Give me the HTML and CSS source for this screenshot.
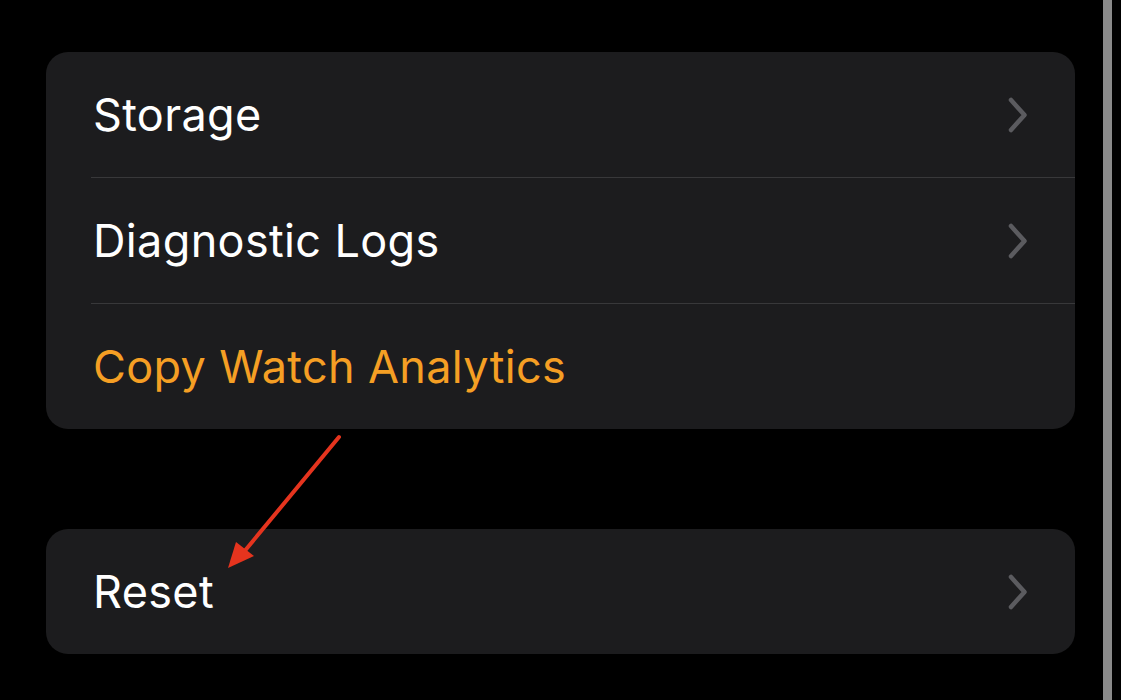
FILE: index.html
```html
<!DOCTYPE html>
<html>
<head>
<meta charset="utf-8">
<link rel="stylesheet" href="styles.css">
</head>
<body>
<div class="screen">
  <div class="content">
    <div class="group">
      <div class="row">
        <span class="label">Storage</span>
        <svg class="chev" viewBox="0 0 22 38" width="22" height="38"><path d="M4 4 L17.5 19 L4 34" fill="none" stroke="#5b5b5f" stroke-width="4.5" stroke-linecap="round" stroke-linejoin="round"/></svg>
      </div>
      <div class="row">
        <span class="label">Diagnostic Logs</span>
        <svg class="chev" viewBox="0 0 22 38" width="22" height="38"><path d="M4 4 L17.5 19 L4 34" fill="none" stroke="#5b5b5f" stroke-width="4.5" stroke-linecap="round" stroke-linejoin="round"/></svg>
      </div>
      <div class="row">
        <span class="label orange">Copy Watch Analytics</span>
      </div>
    </div>
    <div class="group">
      <div class="row">
        <span class="label">Reset</span>
        <svg class="chev" viewBox="0 0 22 38" width="22" height="38"><path d="M4 4 L17.5 19 L4 34" fill="none" stroke="#5b5b5f" stroke-width="4.5" stroke-linecap="round" stroke-linejoin="round"/></svg>
      </div>
    </div>
  </div>
  <div class="scrollbar"></div>
  <svg class="arrow" viewBox="0 0 1121 700" width="1121" height="700">
    <line x1="339" y1="437" x2="243" y2="553" stroke="#e5341e" stroke-width="4" stroke-linecap="round"/>
    <polygon points="228,568 236,542 254,556" fill="#e5341e"/>
  </svg>
</div>
</body>
</html>
```
FILE: styles.css
```css
html, body {
  margin: 0;
  padding: 0;
  background: #000;
}
.screen {
  position: relative;
  width: 1121px;
  height: 700px;
  overflow: hidden;
  background: #000;
  font-family: Inter, "Noto Sans", sans-serif;
}
.content {
  padding: 52px 0 0 46px;
  width: 1029px;
  display: flex;
  flex-direction: column;
  gap: 100px;
}
.group {
  background: #1c1c1e;
  border-radius: 22px;
  overflow: hidden;
}
.row {
  height: 126px;
  display: flex;
  align-items: center;
  justify-content: space-between;
  margin-left: 45px;
  padding-right: 46px;
  box-sizing: border-box;
  border-top: 1px solid #38383a;
}
.row:first-child {
  border-top: none;
  height: 125px;
}
.label {
  color: #fff;
  font-size: 45px;
  letter-spacing: 0.35px;
  padding-left: 2px;
  line-height: 1;
}
.orange {
  color: #f59f24;
}
.chev {
  display: block;
}
.scrollbar {
  position: absolute;
  left: 1103px;
  top: 0;
  width: 9px;
  height: 700px;
  background: #8a8a8a;
}
.arrow {
  position: absolute;
  left: 0;
  top: 0;
  pointer-events: none;
}
```
